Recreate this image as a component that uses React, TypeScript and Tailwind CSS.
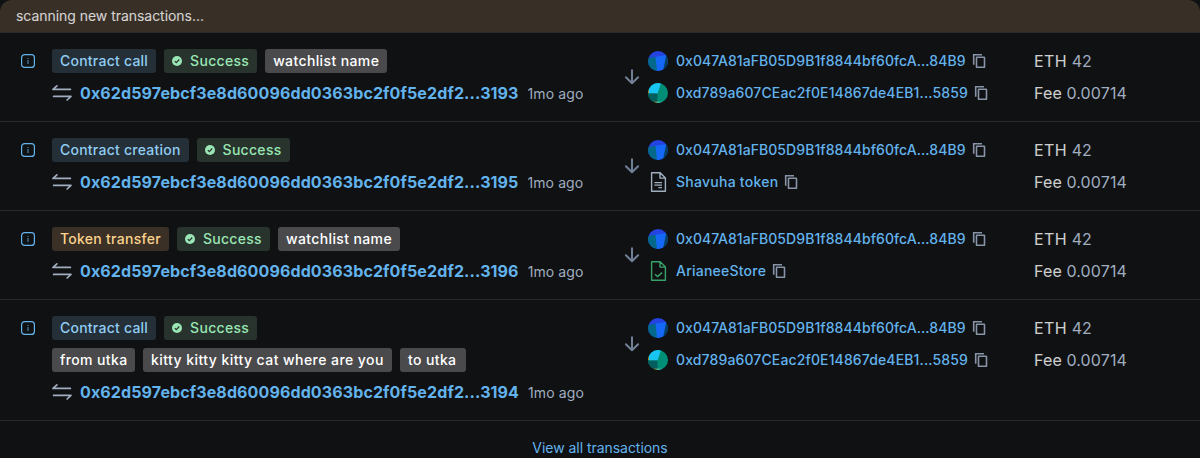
import type { ReactNode } from "react";

type Tone = "blue" | "orange" | "green" | "gray";

const tones: Record<Tone, string> = {
  blue: "bg-[#252f37] text-[#90cdf4] tracking-[0.24px]",
  orange: "bg-[#3a3026] text-[#fbd38d] tracking-[0.28px]",
  green: "bg-[#27332c] text-[#9ae6b4] tracking-[0.3px]",
  gray: "bg-[#4a4a4c] text-white tracking-[0.38px]",
};

function Tag({ tone, children, className = "" }: { tone: Tone; children: ReactNode; className?: string }) {
  return (
    <span
      className={`flex h-6 items-center whitespace-nowrap rounded-[3px] px-2 text-sm font-medium leading-6 ${tones[tone]} ${className}`}
    >
      {children}
    </span>
  );
}

function SuccessTag() {
  return (
    <Tag tone="green" className="w-[93px]">
      <svg viewBox="0 0 10 10" className="mr-2 size-2.5">
        <circle cx="5" cy="5" r="5" fill="#9ae6b4" />
        <path d="M2.8 5.2 4.3 6.7 7.3 3.5" fill="none" stroke="#27332c" strokeWidth="1.2" />
      </svg>
      Success
    </Tag>
  );
}

function InfoIcon() {
  return (
    <svg viewBox="0 0 14 14" className="size-3.5" fill="none">
      <rect x="0.6" y="0.6" width="12.8" height="12.8" rx="3" stroke="#63b3ed" strokeWidth="1.2" />
      <path d="M7 4v1.1M7 6v4" stroke="#63b3ed" strokeWidth="1.1" opacity="0.75" />
    </svg>
  );
}

function TxIcon() {
  return (
    <svg viewBox="0 0 20 20" className="mr-2 size-5 shrink-0" fill="none" stroke="#a0aec0" strokeWidth="1.7" strokeLinecap="round" strokeLinejoin="round">
      <path d="M18.4 6.4H1L4.9 2.9" />
      <path d="M1.6 13.4H19L15.1 17" />
    </svg>
  );
}

function ArrowIcon() {
  return (
    <svg viewBox="0 0 16 16" className="size-4" fill="none" stroke="#718096" strokeWidth="2" strokeLinecap="round" strokeLinejoin="round">
      <path d="M8 1.2v13M1.9 8.2 8 14.3l6.1-6.1" />
    </svg>
  );
}

function CopyIcon() {
  return (
    <svg viewBox="0 0 14 16" className="ml-1.5 h-4 w-3.5 shrink-0" fill="none" stroke="#8793a6" strokeWidth="1.6">
      <path d="M1.7 11.8V1.7H10" />
      <rect x="4.5" y="4.3" width="8" height="10" rx="0.4" />
    </svg>
  );
}

function BlueAvatar() {
  return (
    <svg viewBox="0 0 20 20" className="size-5">
      <clipPath id="blue-avatar">
        <circle cx="10" cy="10" r="10" />
      </clipPath>
      <g clipPath="url(#blue-avatar)">
        <path d="M0 0h20v20H0z" fill="#2443e0" />
        <path d="M0 7 8 5.8 10 20H0z" fill="#03698b" />
        <path d="M17.5 4 20 3v17h-6z" fill="#033f60" />
        <path d="M7.5 5.8 18.3 4 15 20H9z" fill="#1567f5" />
      </g>
    </svg>
  );
}

function TealAvatar() {
  return (
    <svg viewBox="0 0 20 20" className="size-5">
      <clipPath id="teal-avatar">
        <circle cx="10" cy="10" r="10" />
      </clipPath>
      <g clipPath="url(#teal-avatar)">
        <path d="M0 0h20v20H0z" fill="#018e77" />
        <path d="M0 0h13L9.5 10.5H1z" fill="#18c5f2" />
        <path d="M0 10.5h9.5v8.5H0z" fill="#045e5e" />
        <path d="M0 4h1v6H0zM6 18.7h6V20H6z" fill="#d48a16" />
        <path d="M8.5 18.7h6V20h-6z" fill="#18c5c5" />
      </g>
    </svg>
  );
}

function ContractIcon({ verified = false }: { verified?: boolean }) {
  return (
    <svg viewBox="0 0 20 20" className="size-5" fill="none" stroke={verified ? "#38a169" : "#a0aec0"} strokeWidth="1.4" strokeLinejoin="round">
      <path d="M3.6 .7h8.6l5.2 5.2v13.4H3.6zM12 .7v5.4h5.4" />
      {verified ? <path d="m7 13.2 2.5 2.4 4.6-4" /> : <path d="M6.4 10.6H14M6.4 13.1H14M10.4 15.6H14" strokeWidth="1.2" />}
    </svg>
  );
}

function Party({ icon, name, tracking }: { icon: ReactNode; name: string; tracking: string }) {
  return (
    <div className="flex h-6 items-center">
      {icon}
      <a className={`ml-2 whitespace-nowrap text-sm font-medium leading-6 text-[#63b3ed] ${tracking}`}>{name}</a>
      <CopyIcon />
    </div>
  );
}

interface Tx {
  type: string;
  tone: Tone;
  labels?: string[];
  extra?: string[];
  hash: string;
  to: ReactNode;
}

const collector = <Party icon={<TealAvatar />} name="0xd789a607CEac2f0E14867de4EB1...5859" tracking="tracking-[0.13px]" />;

const txs: Tx[] = [
  { type: "Contract call", tone: "blue", labels: ["watchlist name"], hash: "3193", to: collector },
  { type: "Contract creation", tone: "blue", hash: "3195", to: <Party icon={<ContractIcon />} name="Shavuha token" tracking="tracking-[0.26px]" /> },
  { type: "Token transfer", tone: "orange", labels: ["watchlist name"], hash: "3196", to: <Party icon={<ContractIcon verified />} name="ArianeeStore" tracking="tracking-[0.23px]" /> },
  { type: "Contract call", tone: "blue", extra: ["from utka", "kitty kitty kitty cat where are you", "to utka"], hash: "3194", to: collector },
];

const labelStyles: Record<string, string> = {
  "kitty kitty kitty cat where are you": "w-[249px] tracking-[0.44px]",
  "from utka": "w-[83px]",
  "to utka": "w-[66px] tracking-[0.6px]",
  "watchlist name": "w-[122px]",
};

function Row({ tx }: { tx: Tx }) {
  return (
    <div className="flex border-t border-[#28292a] py-4">
      <div className="flex h-6 w-[52px] shrink-0 items-center pl-[21px]">
        <InfoIcon />
      </div>
      <div className="flex w-[572px] shrink-0 flex-col gap-2">
        <div className="flex gap-2">
          <Tag tone={tx.tone}>{tx.type}</Tag>
          <SuccessTag />
          {tx.labels?.map((l) => <Tag key={l} tone="gray" className={labelStyles[l]}>{l}</Tag>)}
        </div>
        {tx.extra && (
          <div className="flex gap-2">
            {tx.extra.map((l) => <Tag key={l} tone="gray" className={labelStyles[l]}>{l}</Tag>)}
          </div>
        )}
        <div className="flex h-6 items-center whitespace-nowrap">
          <TxIcon />
          <a className="text-base font-bold leading-6 tracking-[0.12px] text-[#63b3ed]">0x62d597ebcf3e8d60096dd0363bc2f0f5e2df2...{tx.hash}</a>
          <span className="ml-[9px] pt-0.5 text-sm tracking-[0.1px] text-[#a0aec0]">1mo ago</span>
        </div>
      </div>
      <div className="flex h-14 w-6 shrink-0 items-center">
        <ArrowIcon />
      </div>
      <div className="flex w-[386px] shrink-0 flex-col gap-2">
        <Party icon={<BlueAvatar />} name="0x047A81aFB05D9B1f8844bf60fcA...84B9" tracking="tracking-[0.07px]" />
        {tx.to}
      </div>
      <div className="flex flex-col gap-2 text-base leading-6 tracking-[0.12px] text-[#a0aec0]">
        <div><span className="tracking-[0.4px] text-white/80">ETH</span> 42</div>
        <div><span className="text-white/80">Fee</span> 0.00714</div>
      </div>
    </div>
  );
}

export default function App() {
  return (
    <div className="h-[458px] overflow-hidden bg-[#101112] font-['Inter',sans-serif]">
      <div className="flex h-8 items-center rounded-t-xl bg-[#382f27] px-4 text-sm tracking-[-0.04px] text-white/80">
        scanning new transactions...
      </div>
      {txs.map((tx) => <Row key={tx.hash} tx={tx} />)}
      <div className="border-t border-[#28292a] pt-4 text-center text-sm leading-[22px] tracking-[-0.04px] text-[#63b3ed]">
        View all transactions
      </div>
    </div>
  );
}
